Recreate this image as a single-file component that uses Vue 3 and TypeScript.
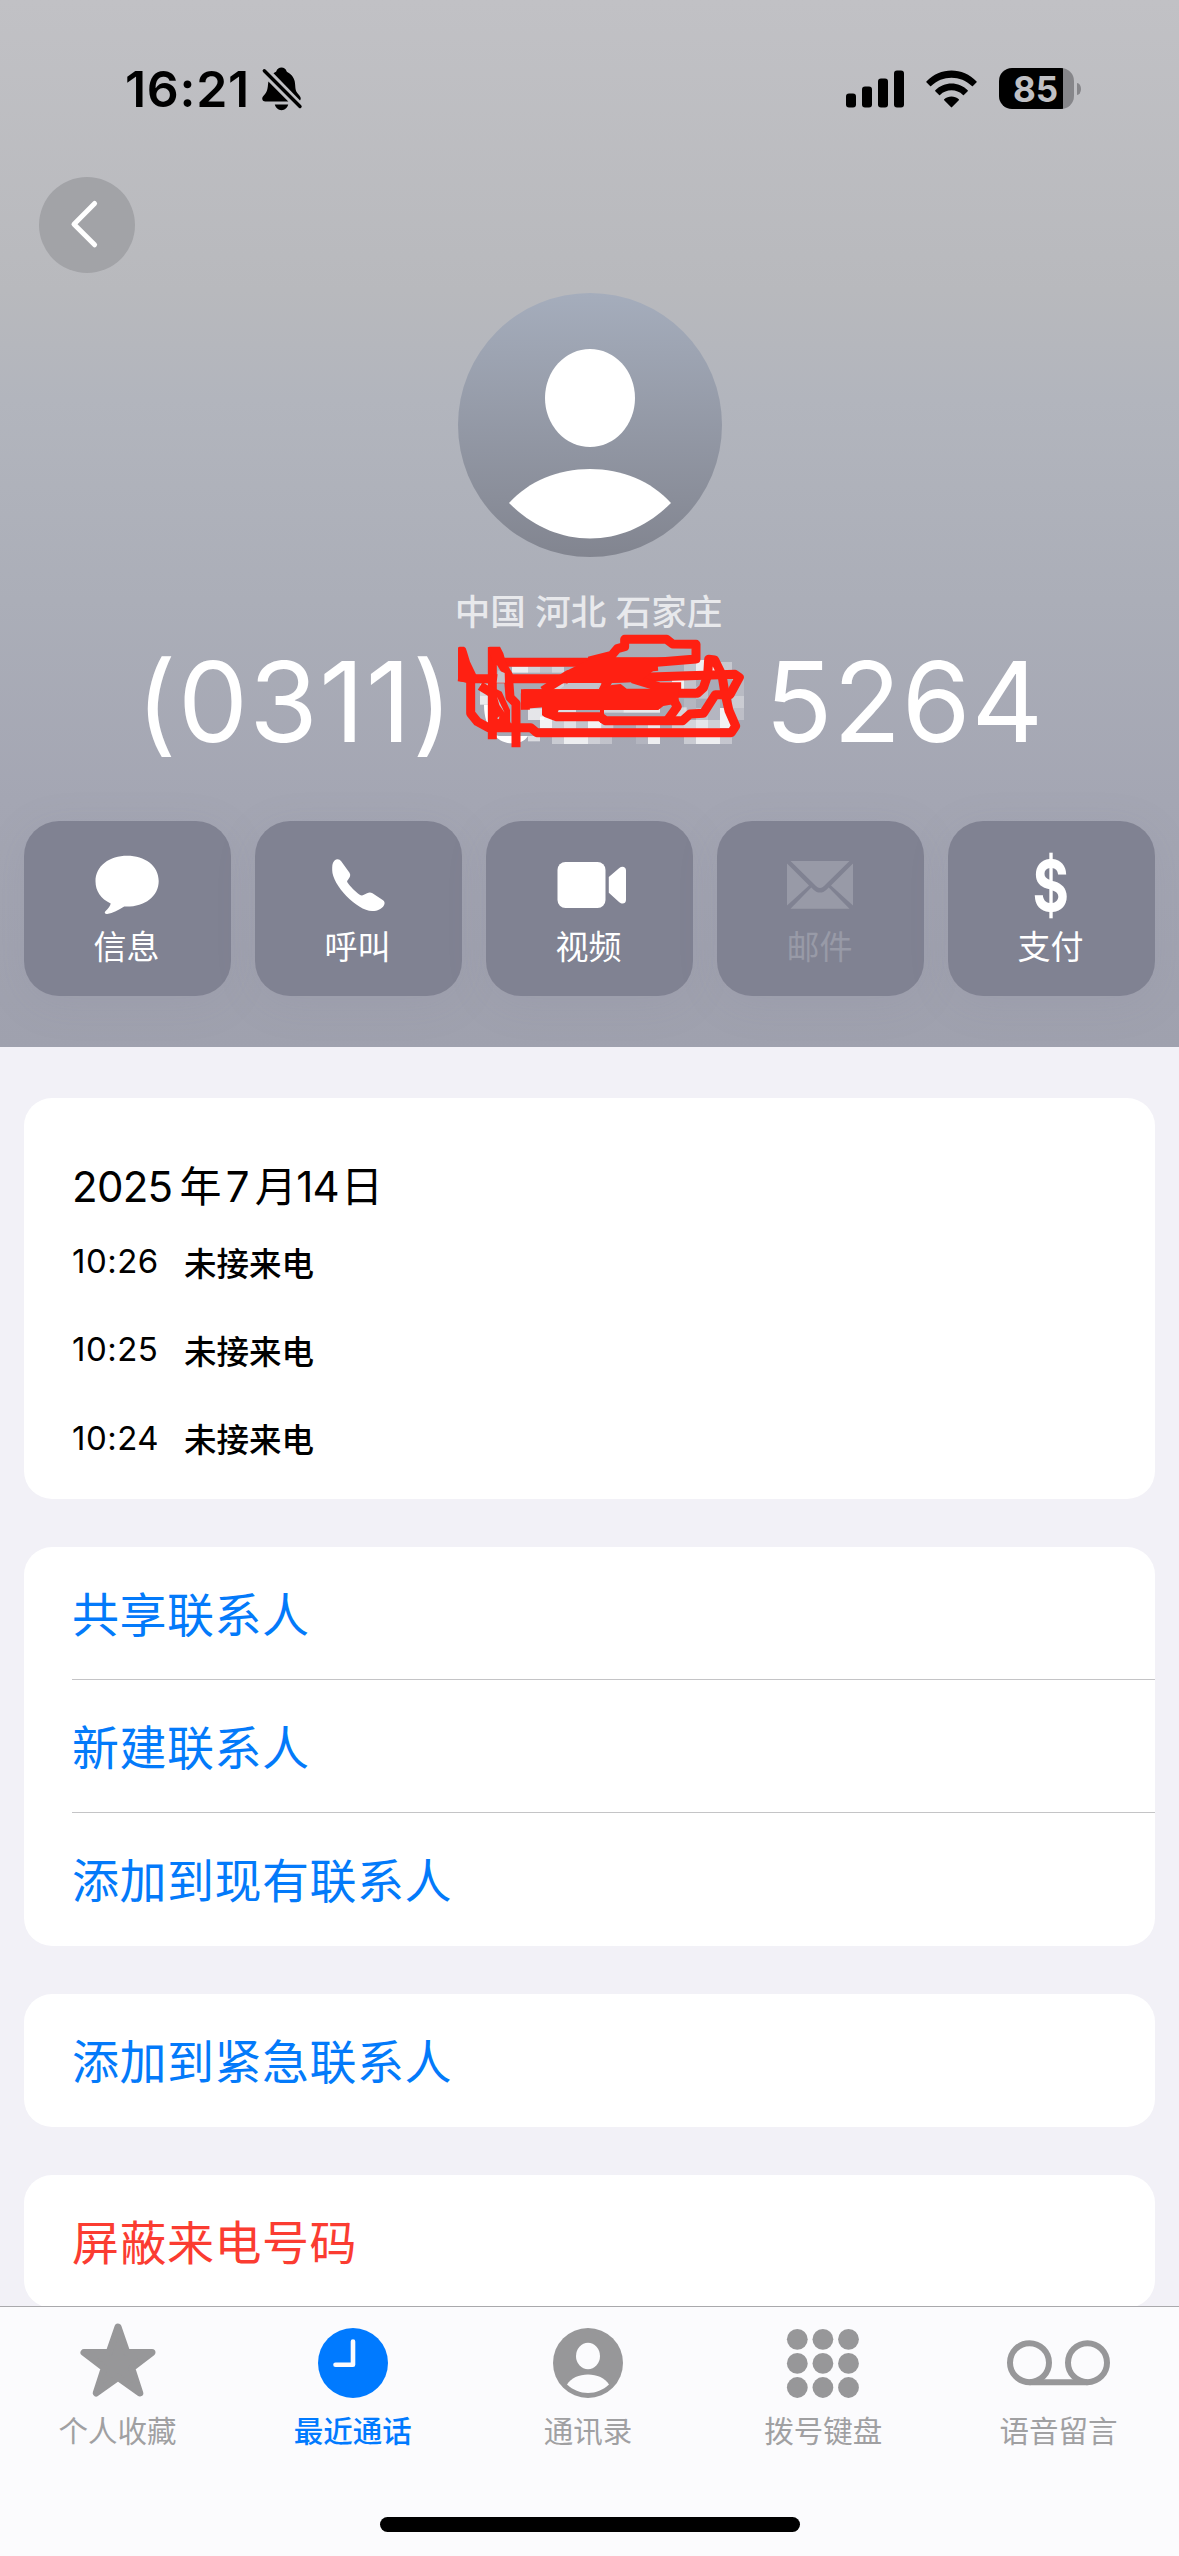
<script setup lang="ts">
interface Action {
  id: string
  label: string
  disabled?: boolean
}

interface Call {
  time: string
  kind: string
}

interface Tab {
  id: string
  label: string
  active?: boolean
}

const actions: Action[] = [
  { id: 'message', label: '信息' },
  { id: 'call', label: '呼叫' },
  { id: 'video', label: '视频' },
  { id: 'mail', label: '邮件', disabled: true },
  { id: 'pay', label: '支付' },
]

const calls: Call[] = [
  { time: '10:26', kind: '未接来电' },
  { time: '10:25', kind: '未接来电' },
  { time: '10:24', kind: '未接来电' },
]

const contactLinks: string[] = ['共享联系人', '新建联系人', '添加到现有联系人']

const tabs: Tab[] = [
  { id: 'favorites', label: '个人收藏' },
  { id: 'recents', label: '最近通话', active: true },
  { id: 'contacts', label: '通讯录' },
  { id: 'keypad', label: '拨号键盘' },
  { id: 'voicemail', label: '语音留言' },
]

const dots: number[] = [10.3, 35.9, 61.5]
const rows: number[] = [10.3, 34.4, 58.5]

// Pixelated cells under the marker: x, y, width, height, opacity of white
const mosaic: number[][] = [
  [216, 140, 48, 18, 0.8], [264, 140, 36, 18, 0.45], [336, 140, 36, 18, 0.5], [300, 140, 36, 18, 0.25],
  [336, 186, 36, 24, 0.5], [372, 186, 36, 24, 0.2], [408, 186, 36, 24, 0.4], [444, 186, 40, 24, 0.25],
  [120, 192, 36, 36, 0.5], [120, 228, 40, 26, 0.75], [660, 186, 36, 24, 0.75], [696, 176, 36, 34, 0.85],
  [732, 176, 36, 34, 0.3], [768, 120, 36, 36, 0.8], [732, 126, 36, 28, 0.3], [840, 126, 36, 36, 0.35],
  [804, 140, 36, 24, 0.85], [876, 176, 36, 52, 0.2], [876, 228, 36, 36, 0.4], [876, 264, 36, 36, 0.25],
  [768, 200, 36, 36, 0.3], [732, 236, 36, 36, 0.15], [768, 264, 36, 36, 0.3], [804, 230, 36, 70, 0.15],
  [840, 264, 36, 60, 0.85], [804, 300, 36, 28, 0.45], [768, 300, 36, 28, 0.7], [732, 300, 36, 28, 0.5],
  [264, 265, 48, 35, 0.7], [300, 290, 36, 34, 0.85], [336, 300, 36, 26, 0.4], [372, 300, 36, 26, 0.65],
  [408, 300, 36, 26, 0.3], [444, 300, 40, 26, 0.85], [484, 308, 36, 18, 0.4], [588, 308, 36, 18, 0.3],
  [624, 308, 36, 18, 0.75], [696, 308, 36, 18, 0.45], [348, 266, 60, 10, 0.6], [490, 262, 60, 16, 0.5],
  [550, 262, 110, 16, 0.75], [700, 262, 40, 34, 0.5], [336, 348, 36, 24, 0.4], [372, 348, 72, 24, 0.8],
  [444, 348, 36, 24, 0.45], [480, 348, 36, 24, 0.3], [588, 348, 36, 24, 0.15], [624, 348, 36, 24, 0.8],
  [732, 348, 36, 24, 0.4], [768, 348, 72, 24, 0.8], [840, 348, 36, 24, 0.35], [264, 348, 36, 16, 0.6],
]
</script>

<template>
  <div class="screen">
    <div class="scroll">
      <header class="hero">
        <div class="status">
          <span class="clock">16:21</span>
          <svg class="bell" viewBox="0 0 40 44" width="40" height="44">
            <path d="M11.5 6.2C13.3 5 14 5 14.4 3.900C15.200 1.800 17 .5 19.500 .5s4.300 1.300 5 3.400c.4 1.100 1 1.100 2.400 2.200C31.500 9.500 33 13 33.200 18.500c.3 5.300 1 6.500 4 9.700 1.700 1.900 2.100 3.700 .8 5.300Z" />
            <path d="M6.400 14.500 26.300 34.400H3.200C.5 34.400-.5 31.800.8 29.800c.8-1.300 2.800-3 4-5.800C5.800 21.500 5.900 18 6.400 14.500Z" />
            <path d="M12.800 37.500h13.400c-.8 3.400-3.500 5.700-6.700 5.700s-5.900-2.300-6.700-5.700Z" />
            <path d="M2.300 3.700 38 39.500" fill="none" stroke="#000" stroke-width="3.400" stroke-linecap="round" />
          </svg>
          <svg class="signal" viewBox="0 0 58 38" width="58" height="38">
            <rect x="0" y="23.500" width="10" height="14" rx="3" />
            <rect x="16" y="16.500" width="10" height="21" rx="3" />
            <rect x="32" y="8.500" width="10" height="29" rx="3" />
            <rect x="48" y=".5" width="10" height="37" rx="3" />
          </svg>
          <svg class="wifi" viewBox="0 0 51 38" width="51" height="38">
            <path d="M.4 11.400C14-3.200 37-3.200 50.600 11.400c.3.300.3.600 0 .9l-3.700 3.700c-.3.300-.7.300-1 0C34.700 4.900 16.300 4.900 5.100 16c-.3.300-.7.300-1 0L.4 12.300c-.3-.3-.3-.6 0-.9Z" />
            <path d="M9.300 20.300c9-9.100 23.400-9.100 32.400 0 .3.300.3.600 0 .9l-3.800 3.800c-.3.300-.6.300-.9 0-6.500-6.200-16.500-6.200-23 0-.3.300-.6.300-.9 0l-3.800-3.800c-.3-.3-.3-.6 0-.9Z" />
            <path d="M18.200 29.300c4.200-3.700 10.400-3.700 14.600 0 .3.300.3.700 0 1l-6.700 6.800c-.4.400-.8.400-1.200 0l-6.700-6.800c-.3-.3-.3-.7 0-1Z" />
          </svg>
          <div class="battery"><span>85</span></div>
          <i class="nub"></i>
        </div>

        <button class="back" aria-label="返回">
          <svg viewBox="0 0 96 96" width="96" height="96">
            <path d="M55.600 26.500 35 47.300 55.600 67.800" fill="none" stroke="#fff" stroke-width="5" stroke-linecap="round" stroke-linejoin="round" />
          </svg>
        </button>

        <svg class="avatar" viewBox="0 0 264 264" width="264" height="264">
          <defs>
            <linearGradient id="disc" x1="0" y1="0" x2="0" y2="1">
              <stop offset="0" stop-color="#a5adbc" />
              <stop offset="1" stop-color="#828590" />
            </linearGradient>
          </defs>
          <circle cx="132" cy="132" r="132" fill="url(#disc)" />
          <ellipse cx="132" cy="105" rx="45" ry="49" fill="#fff" />
          <path d="M51 210C71 188 100 176 132 176s61 12 81 34c-22 22-50 35.500-81 35.500S73 232 51 210Z" fill="#fff" />
        </svg>

        <p class="place">中国 河北 石家庄</p>

        <h1 class="number">
          <span class="area">(0311)</span>
          <svg class="redacted" viewBox="0 0 960 480" width="320" height="160">
            <rect v-for="(m, i) in mosaic" :key="i" :x="m[0]" :y="m[1]" :width="m[2]" :height="m[3]" :fill-opacity="m[4]" fill="#fff" />
            <path d="M132 254h14v84l30 10h88c-10 16-28 22-50 22s-40-10-56-30c-16-22-26-50-26-86Z" fill="#fff" />
            <g fill="none" stroke="#ff2012" stroke-width="27" stroke-linecap="square" stroke-linejoin="round">
              <path d="M92 180V280L112 305 145 323H272L290 338H874L887 318 867 272 854 215 846 165 824 120 806 118 803 165 790 204 772 220H700" />
              <path d="M157 95V344" />
              <path d="M200 127H650L768 117V73L698 72 680 58H554V80L532 86 515 106 460 120" />
              <path d="M68 172 105 176H470L885 163 898 172 870 224H826L790 280 750 282 728 302H496L480 290H350L320 279V250" />
              <path d="M165 100 205 165 210 232 228 250V368" />
              <path d="M132 205 165 225 198 310" />
              <path d="M256 256V221H700" />
              <path d="M320 205 385 164 540 140M495 200 520 150 640 140M590 180 655 200H710M695 230 712 260 690 290" />
            </g>
            <path d="M54 84Q54 80 60 80H72Q78 82 80 92L90 125 108 163 120 188H78L54 182ZM144 84Q144 80 150 80H180L190 100 200 135H160ZM243 208H480L515 195 542 192 560 206H716L716 250 670 258 655 270H356L346 295 306 286V262L243 268ZM145 195 185 215 210 270V330H145ZM480 262H492V308H480ZM380 152 460 112H680L640 152 600 185 380 195Z" fill="#ff2012" />
            <path d="M174 151 194 159 195 188H170ZM171 230 194 278 178 255ZM171 295 178 289 177 298ZM384 189H484L468 207H360Z" fill="#c2c4cc" />
          </svg>
          <span class="line">5264</span>
        </h1>

        <div class="actions">
          <button v-for="a in actions" :key="a.id" class="action" :class="{ disabled: a.disabled }">
            <svg viewBox="0 0 80 70" width="80" height="70">
              <path v-if="a.id === 'message'" d="M40 5.700C57.500 5.700 71.500 17 71.500 34.500S57.500 64 39 63.800l-2-.2C31.500 67.500 25.500 71.500 20 72.200c-2.200.3-3.200-1.500-1.800-3 2.800-3 5-6 5.300-8.800C13.500 55 8.300 46 8.300 35 8.300 17 22.500 5.700 40 5.700Z" transform="translate(-.8 .7) scale(1 .876)" />
              <path v-else-if="a.id === 'call'" d="M15.600 10.500C18.200 8.100 20.800 8.600 22.500 11.300L30.800 24.300C32.300 27 31.300 29.400 29.500 32.200 28.200 34 28.100 34.300 29 36 31.500 40.200 36.500 46 41 49.700c1.500 1.300 2.700 1.100 4.200.1C48.500 47.400 51.200 46 53.800 48L64 55.700c2.100 1.600 2.400 3.700 1.300 6.100C63 66.500 58.500 68.500 53.500 68.400 38 68 13.500 38 13.500 21.500c0-4.500-.2-8.300 2.100-11Z" transform="translate(-.3 1.500) scale(1 .87)" />
              <g v-else-if="a.id === 'video'" transform="translate(-1.200 0)">
                <rect x="8.700" y="12" width="48" height="46" rx="8" />
                <path d="M60 27 70.500 18C73.200 15.600 77.200 16.500 77.200 20.300V50c0 3.800-4 4.700-6.700 2.200L60 42.800Z" />
              </g>
              <g v-else-if="a.id === 'mail'" transform="translate(-1 0)">
                <path d="M10.500 11H69.500L44 36c-2.500 2.500-5.500 2.500-8 0Z" />
                <path d="M7 13.500 29 35.400 7 55.500ZM73 13.500 51 35.400 73 55.500ZM31.300 37.500l2.500 2.400c3.500 3.400 8.900 3.400 12.400 0l2.500-2.400L69.500 58.800H10.500Z" />
              </g>
              <text v-else x="40" y="57" text-anchor="middle" class="dollar" transform="translate(38.800 34.500) scale(.9 1.140) translate(-40 -33.500)">$</text>
            </svg>
            <span>{{ a.label }}</span>
          </button>
        </div>
      </header>

      <main class="content">
        <section class="card history">
          <h2 class="date"><span>2025</span><span class="y">年</span><span>7</span><span class="m">月</span><span>14</span><span class="d">日</span></h2>
          <div v-for="c in calls" :key="c.time" class="call">
            <time>{{ c.time }}</time>
            <span>{{ c.kind }}</span>
          </div>
        </section>

        <section class="card">
          <a v-for="l in contactLinks" :key="l" class="link">{{ l }}</a>
        </section>

        <section class="card">
          <a class="link">添加到紧急联系人</a>
        </section>

        <section class="card">
          <a class="link danger">屏蔽来电号码</a>
        </section>
      </main>
    </div>

    <footer class="bottom">
      <nav class="tabs">
        <a v-for="t in tabs" :key="t.id" class="tab" :class="{ active: t.active }">
          <svg v-if="t.id === 'favorites'" viewBox="0 0 76 74" width="76" height="74">
            <path d="M38 4 46.800 29.500H72L51.700 45 59.800 70 38 54.300 16.200 70 24.300 45 4 29.500H29.200Z" stroke="currentColor" stroke-width="7" stroke-linejoin="round" />
          </svg>
          <svg v-else-if="t.id === 'recents'" viewBox="0 0 70 70" width="70" height="70">
            <circle cx="35" cy="35" r="35" />
            <path d="M35 13.500V36.800H17.500" fill="none" stroke="#fbfbfd" stroke-width="4.600" stroke-linecap="round" stroke-linejoin="round" />
          </svg>
          <svg v-else-if="t.id === 'contacts'" viewBox="0 0 70 70" width="70" height="70">
            <circle cx="35" cy="35" r="35" />
            <ellipse cx="35" cy="28" rx="12" ry="13.200" fill="#fbfbfd" />
            <path d="M14 56.500C18 50 26 46.500 35 46.500S52 50 56 56.500C50 62 43 65 35 65S20 62 14 56.500Z" fill="#fbfbfd" />
          </svg>
          <svg v-else-if="t.id === 'keypad'" viewBox="0 0 72 69" width="72" height="69">
            <template v-for="y in rows" :key="y">
              <circle v-for="x in dots" :key="x" :cx="x" :cy="y" r="10.400" />
            </template>
          </svg>
          <svg v-else viewBox="0 0 103 46" width="103" height="46">
            <g fill="none" stroke="currentColor" stroke-width="6">
              <circle cx="22.500" cy="22.700" r="19.500" />
              <circle cx="80.500" cy="22.700" r="19.500" />
              <path d="M22.500 42.200H80.500" />
            </g>
          </svg>
          <span>{{ t.label }}</span>
        </a>
      </nav>
      <div class="home"></div>
    </footer>
  </div>
</template>

<style>
body {
  margin: 0;
}
</style>

<style scoped>
.screen {
  width: 1179px;
  height: 2556px;
  display: flex;
  flex-direction: column;
  overflow: hidden;
  background: #f2f1f7;
  color: #000;
  font-family: Inter, 'Noto Sans CJK SC', sans-serif;
}

button {
  border: 0;
  padding: 0;
  font: inherit;
}

svg {
  display: block;
  flex: none;
  overflow: visible;
}

.scroll {
  height: 2306px;
  flex: none;
  overflow: hidden;
}

.hero {
  height: 1047px;
  box-sizing: border-box;
  display: flex;
  flex-direction: column;
  align-items: center;
  background: linear-gradient(#c1c1c5 0, #b8b9bd 290px, #b2b5bd 400px, #abaeb8 600px, #a4a6b3 800px, #9fa1ae 1047px);
}

.status {
  width: 100%;
  height: 177px;
  box-sizing: border-box;
  padding-left: 125px;
  display: flex;
  align-items: center;
}

.clock {
  width: 137px;
  font-size: 50px;
  font-weight: 600;
  line-height: 60px;
  letter-spacing: 0.700px;
}

.signal {
  margin-left: 544px;
}

.wifi {
  margin-left: 22px;
}

.battery {
  width: 75px;
  height: 41px;
  margin-left: 22px;
  border-radius: 13px;
  background: linear-gradient(90deg, #000 64px, #86868a 64px);
  color: #c0c0c4;
  font-size: 35px;
  font-weight: 700;
  line-height: 42px;
}

.battery span {
  display: block;
  margin-left: 14px;
}

.nub {
  width: 4px;
  height: 12px;
  margin-left: 3px;
  border-radius: 0 4px 4px 0 / 0 6px 6px 0;
  background: #86868a;
}

.back {
  width: 96px;
  height: 96px;
  align-self: flex-start;
  margin-left: 39px;
  border-radius: 50%;
  background: #a2a3a7;
}

.avatar {
  margin-top: 20px;
}

.place {
  height: 47px;
  margin: 32px 2px 0 0;
  color: #e8e9ec;
  font-size: 35.500px;
  font-weight: 500;
  line-height: 48px;
}

.number {
  width: 100%;
  height: 130px;
  margin: 1px 0 0;
  display: flex;
  align-items: center;
  color: #fff;
  font-size: 111px;
  font-weight: 400;
  line-height: 130px;
}

.area {
  width: 304px;
  margin-left: 136px;
  letter-spacing: 1.400px;
}

.redacted {
  margin-top: -4px;
}

.line {
  margin-left: 5px;
  letter-spacing: 0.800px;
}

.actions {
  width: 100%;
  margin-top: 54px;
  padding: 0 24px;
  box-sizing: border-box;
  display: grid;
  grid-template-columns: repeat(5, 1fr);
  gap: 24px;
}

.action {
  height: 175px;
  display: flex;
  flex-direction: column;
  align-items: center;
  border-radius: 35px;
  background: #808292;
  box-shadow: 0 8px 40px rgba(128, 130, 146, 0.14);
  color: #fff;
}

.action svg {
  margin-top: 29px;
  fill: currentColor;
}

.action span {
  height: 40px;
  margin: 7px 2px 0 0;
  font-size: 33px;
  line-height: 40px;
}

.action.disabled {
  color: #989aa7;
}

.dollar {
  font-size: 62px;
  font-weight: 700;
}

.content {
  padding: 51px 24px 0;
  display: flex;
  flex-direction: column;
  gap: 48px;
}

.card {
  border-radius: 28px;
  background: #fff;
}

.history {
  height: 401px;
  box-sizing: border-box;
  padding: 60px 48px 0;
}

.date {
  height: 59px;
  margin: 0;
  display: flex;
  font-size: 42px;
  font-weight: 400;
  line-height: 57px;
  letter-spacing: -0.700px;
}

.y {
  margin: 0 5px 0 7px;
}

.m {
  margin-left: 6px;
}

.d {
  margin-left: 2px;
}

.call {
  height: 88.300px;
  display: flex;
  align-items: center;
  font-size: 33px;
}

.call time {
  width: 112px;
  letter-spacing: 0.500px;
}

.call span {
  font-size: 32.500px;
  font-weight: 500;
}

.link {
  height: 133px;
  margin-left: 48px;
  display: block;
  box-sizing: border-box;
  padding-top: 2px;
  color: #037afa;
  font-size: 47px;
  line-height: 131px;
  letter-spacing: 0.500px;
}

.link + .link {
  box-shadow: 0 -1px #c4c4c6;
}

.link.danger {
  color: #fb3c31;
}

.bottom {
  height: 250px;
  box-sizing: border-box;
  border-top: 1px solid #a9a9ac;
  background: #fbfbfd;
}

.tabs {
  height: 210px;
  margin-right: 3px;
  display: grid;
  grid-template-columns: repeat(5, 1fr);
}

.tab {
  height: 147px;
  display: grid;
  grid-template-rows: 104px 40px;
  justify-items: center;
  align-items: center;
  color: #979799;
}

.tab svg {
  margin-top: 8px;
  fill: currentColor;
}

.tab:first-child svg {
  margin-top: 2px;
}

.tab span {
  color: #a0a0a2;
  font-size: 29.500px;
  font-weight: 400;
  line-height: 40px;
}

.tab.active,
.tab.active span {
  color: #007aff;
}

.tab.active span {
  font-weight: 500;
}

.home {
  width: 420px;
  height: 15px;
  margin: 0 auto;
  border-radius: 8px;
  background: #000;
}
</style>
